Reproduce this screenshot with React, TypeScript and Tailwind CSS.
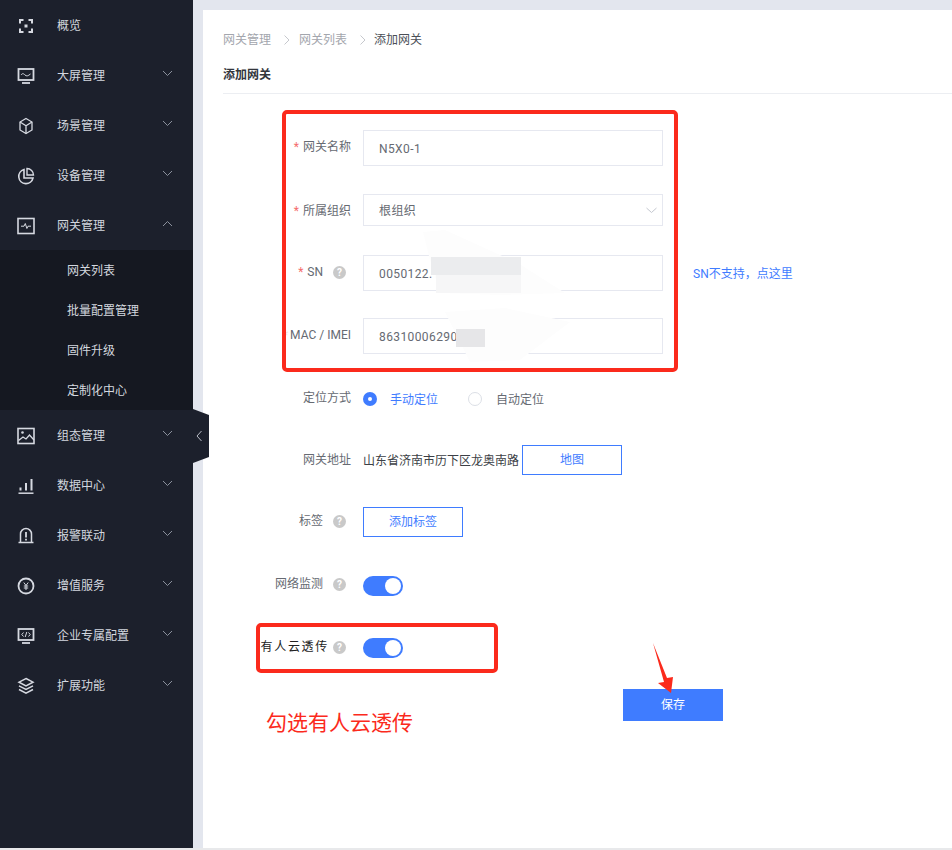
import type { ReactNode } from "react";

const Svg = ({ children }: { children: ReactNode }) => (
  <svg
    width="18"
    height="18"
    viewBox="0 0 18 18"
    fill="none"
    stroke="#d6d9e1"
    strokeWidth="1.5"
  >
    {children}
  </svg>
);

const Chevron = ({ up }: { up?: boolean }) => (
  <svg width="11" height="7" viewBox="0 0 11 7" fill="none" stroke="#8b919d" strokeWidth="1">
    <path d={up ? "M1 6l4.5-4.5L10 6" : "M1 1l4.5 4.5L10 1"} />
  </svg>
);

const menuTop = [
  {
    title: "概览",
    icon: (
      <Svg>
        <path d="M6.500 3H3v3.500M11.500 3H15v3.500M6.500 15H3v-3.500M11.500 15H15v-3.500" strokeWidth="2" />
        <rect x="7.500" y="7.500" width="3" height="3" fill="#d6d9e1" stroke="none" />
      </Svg>
    ),
  },
  {
    title: "大屏管理",
    arrow: true,
    icon: (
      <Svg>
        <rect x="1.500" y="2" width="15" height="11" strokeWidth="1.800" />
        <path d="M4 8c1.500-2 2.500-1.500 4 0s3 1 5.500-1" strokeWidth="1" />
        <path d="M5 16h8" strokeWidth="1.800" />
      </Svg>
    ),
  },
  {
    title: "场景管理",
    arrow: true,
    icon: (
      <Svg>
        <path d="M9 1.500l6 3.500v8l-6 3.500-6-3.500V5z" strokeWidth="1.300" />
        <path d="M3 5l6 3.800L15 5M9 8.800V16.500" strokeWidth="1.300" />
      </Svg>
    ),
  },
  {
    title: "设备管理",
    arrow: true,
    icon: (
      <Svg>
        <path d="M7 2.500a7.200 7.200 0 1 0 9 8.500H7z" strokeWidth="1.600" />
        <path d="M10 1.500a6.500 6.500 0 0 1 6.500 6.500H10z" strokeWidth="1.400" />
      </Svg>
    ),
  },
];

const menuBottom = [
  {
    title: "组态管理",
    icon: (
      <Svg>
        <rect x="1" y="1.500" width="16" height="15" strokeWidth="1.600" />
        <circle cx="5.500" cy="5.500" r="1.300" fill="#d6d9e1" stroke="none" />
        <path d="M1.500 13.500l4.500-3.500 3 2 3.500-4 4.500 5" strokeWidth="1.300" />
      </Svg>
    ),
  },
  {
    title: "数据中心",
    icon: (
      <Svg>
        <path d="M1.500 16.200h15" />
        <path d="M3.500 13.500v-3M9 13.500V6M14.500 13.500V2" strokeWidth="2" />
      </Svg>
    ),
  },
  {
    title: "报警联动",
    icon: (
      <Svg>
        <path d="M3.500 15V7a5.500 5.500 0 0 1 11 0v8" />
        <path d="M1.500 15.500h15" />
        <path d="M9 5v5.500M9 11.800v1.700" strokeWidth="1.800" />
      </Svg>
    ),
  },
  {
    title: "增值服务",
    icon: (
      <Svg>
        <circle cx="9" cy="9" r="7.500" strokeWidth="1.800" />
        <path d="M6.800 5.500L9 8.500l2.200-3M6.800 9h4.400M6.800 11h4.400M9 8.500V13" strokeWidth="1" />
      </Svg>
    ),
  },
  {
    title: "企业专属配置",
    icon: (
      <Svg>
        <rect x="1.500" y="2" width="15" height="11" strokeWidth="1.800" />
        <path d="M6.500 5.500L4.800 7.500l1.700 2M11.500 5.500l1.700 2-1.700 2M9.800 5L8.200 10" strokeWidth="1" />
        <path d="M5 16h8" strokeWidth="1.800" />
      </Svg>
    ),
  },
  {
    title: "扩展功能",
    icon: (
      <Svg>
        <path d="M9 1.500l7 3.700-7 3.700-7-3.700z" strokeWidth="1.500" />
        <path d="M2 8.800l7 3.700 7-3.700M2 12.500l7 3.700 7-3.700" strokeWidth="1.500" />
      </Svg>
    ),
  },
];

const subMenu = ["网关列表", "批量配置管理", "固件升级", "定制化中心"];

function MenuRow({ title, icon, arrow, up }: { title: string; icon: ReactNode; arrow?: boolean; up?: boolean }) {
  return (
    <div className="h-[50px] pt-[2px] flex items-center relative pl-[17px] text-[12px] text-[#d3d7df]">
      <div className="w-[18px] h-[18px] flex">{icon}</div>
      <span className="ml-[22px]">{title}</span>
      {arrow && (
        <span className="absolute left-[162px] top-[20px] flex">
          <Chevron up={up} />
        </span>
      )}
    </div>
  );
}

function Help({ tight }: { tight?: boolean }) {
  return (
    <span
      className={`w-[13px] h-[13px] rounded-full bg-[#c9c9c9] text-white text-[10px] font-bold leading-[13px] text-center inline-block mr-[5px] ${
        tight ? "ml-[4px]" : "ml-[10px]"
      }`}
    >
      ?
    </span>
  );
}

function Label({
  text,
  required,
  faint,
  help,
  offset = "-mt-[2px]",
}: {
  text: string;
  required?: boolean;
  faint?: boolean;
  help?: boolean;
  offset?: string;
}) {
  return (
    <div className={`w-[128px] shrink-0 flex justify-end items-center text-[12px] text-[#666a72] ${offset}`}>
      {required && <span className="text-[#f56c6c] mr-[4px]">*</span>}
      {faint && <span className="text-[#f0e4e4] mr-[2px]">*</span>}
      <span>{text}</span>
      {help && <Help />}
    </div>
  );
}

function Input({ value, h = 36 }: { value: string; h?: number }) {
  return (
    <div
      className={`w-[300px] border border-[#e6e8f0] flex items-center pl-[15px] pt-[2px] text-[12px] tracking-[0.4px] text-[#666a72] ${
        h === 36 ? "h-[36px]" : "h-[32px]"
      }`}
    >
      {value}
    </div>
  );
}

function Switch() {
  return (
    <div className="w-[40px] h-[20px] rounded-full bg-[#3f7cff] flex justify-end items-center pr-[2px] ml-[12px]">
      <div className="w-[16px] h-[16px] rounded-full bg-white" />
    </div>
  );
}

export default function App() {
  return (
    <div className="w-[952px] h-[850px] overflow-hidden relative flex flex-col bg-white font-['Roboto','Noto_Sans_CJK_SC',sans-serif]">
      <div className="flex h-[848px]">
        {/* sidebar */}
        <aside className="w-[193px] shrink-0 bg-[#1c202c]">
          {menuTop.map((m) => (
            <MenuRow key={m.title} title={m.title} icon={m.icon} arrow={m.arrow} />
          ))}
          <MenuRow
            title="网关管理"
            arrow
            up
            icon={
              <Svg>
                <rect x="1" y="1.500" width="16" height="15" strokeWidth="1.600" />
                <path d="M4 9.200h3l1.300-2.700 1.600 5 1.100-2.300h3" strokeWidth="1" />
              </Svg>
            }
          />
          <div className="bg-[#151821]">
            {subMenu.map((s) => (
              <div key={s} className="h-[40px] pt-[2px] flex items-center pl-[67px] text-[12px] text-[#d3d7df]">
                {s}
              </div>
            ))}
          </div>
          {menuBottom.map((m) => (
            <MenuRow key={m.title} title={m.title} icon={m.icon} arrow />
          ))}
        </aside>

        {/* content */}
        <main className="flex-1 bg-[#e3e6ee] pl-[10px] pt-[10px]">
          <div className="bg-white h-full pl-[20px]">
            <div className="h-[20px] pt-[20px] box-content flex items-center text-[12px] text-[#a3a6ad]">
              <span>网关管理</span>
              <svg className="ml-[13px] mr-[9px]" width="6" height="10" viewBox="0 0 6 10" fill="none" stroke="#c6c8cd">
                <path d="M.5.5L5 5 .5 9.500" />
              </svg>
              <span>网关列表</span>
              <svg className="ml-[13px] mr-[8px]" width="6" height="10" viewBox="0 0 6 10" fill="none" stroke="#c6c8cd">
                <path d="M.5.5L5 5 .5 9.500" />
              </svg>
              <span className="text-[#4b4f57]">添加网关</span>
            </div>
            <div className="mt-[15px] h-[20px] pb-[8px] text-[12px] font-bold text-[#33363c] border-b border-[#eceef2] box-content leading-[20px]">
              添加网关
            </div>

            {/* form */}
            <div className="mt-[36px] flex items-center">
              <Label text="网关名称" required />
              <div className="ml-[12px]">
                <Input value="N5X0-1" />
              </div>
            </div>
            <div className="mt-[28px] flex items-center">
              <Label text="所属组织" required offset="mt-[2px]" />
              <div className="ml-[12px] relative">
                <Input value="根组织" h={32} />
                <svg
                  className="absolute right-[6px] top-[13px]"
                  width="11"
                  height="7"
                  viewBox="0 0 11 7"
                  fill="none"
                  stroke="#c4c7cf"
                >
                  <path d="M.5 1l5 4.500 5-4.500" />
                </svg>
              </div>
            </div>
            <div className="mt-[29px] flex items-center">
              <Label text="SN" required help />
              <div className="ml-[12px]">
                <Input value="0050122." />
              </div>
              <a className="ml-[30px] pt-[2px] text-[12px] text-[#3f7cff]">SN不支持，点这里</a>
            </div>
            <div className="mt-[27px] flex items-center">
              <Label text="MAC / IMEI" faint />
              <div className="ml-[12px]">
                <Input value="86310006290" />
              </div>
            </div>
            <div className="mt-[35px] h-[20px] flex items-center">
              <Label text="定位方式" />
              <div className="ml-[12px] flex items-center text-[12px]">
                <span className="w-[14px] h-[14px] rounded-full bg-[#3f7cff] flex items-center justify-center">
                  <span className="w-[4px] h-[4px] rounded-full bg-white" />
                </span>
                <span className="ml-[13px] pt-[2px] text-[#3f7cff]">手动定位</span>
                <span className="ml-[30px] w-[14px] h-[14px] rounded-full border border-[#dcdfe6]" />
                <span className="ml-[14px] pt-[2px] text-[#666a72]">自动定位</span>
              </div>
            </div>
            <div className="mt-[36px] flex items-center">
              <Label text="网关地址" offset="mt-0" />
              <span className="ml-[12px] pt-[2px] text-[12px] text-[#3c3f46] w-[159px] whitespace-nowrap">山东省济南市历下区龙奥南路</span>
              <button className="w-[100px] h-[30px] border border-[#3f7cff] text-[12px] text-[#3f7cff]">地图</button>
            </div>
            <div className="mt-[32px] flex items-center">
              <Label text="标签" help />
              <button className="ml-[12px] w-[100px] h-[30px] border border-[#3f7cff] text-[12px] text-[#3f7cff]">
                添加标签
              </button>
            </div>
            <div className="mt-[39px] flex items-center">
              <Label text="网络监测" help offset="-mt-[4px]" />
              <Switch />
            </div>
            <div className="mt-[42px] flex items-center">
              <div className="w-[128px] shrink-0 flex justify-end items-center text-[12px] text-[#222] -mt-[2px] whitespace-nowrap">
                <span className="tracking-[1.700px]">有人云透传</span>
                <Help tight />
              </div>
              <Switch />
            </div>
            <button className="mt-[31px] ml-[400px] w-[100px] h-[32px] bg-[#3f7cff] text-white text-[12px] block">
              保存
            </button>
          </div>
        </main>
      </div>
      <div className="h-[2px] bg-[#e8e9eb]" />

      {/* sidebar collapse handle */}
      <div className="absolute left-[193px] top-[409px] flex">
        <svg width="16" height="54" viewBox="0 0 16 54">
          <path d="M0 0l16 6v42L0 54z" fill="#1c202c" />
          <path d="M8.500 22L4 27l4.500 5" fill="none" stroke="#b8bcc6" />
        </svg>
      </div>

      {/* blurred-out serial numbers */}
      <svg className="absolute left-0 top-0 pointer-events-none" width="952" height="850">
        <path d="M423 232l22-2 55 25 21 10 44 28-65 2-60-2-10-33z" fill="#fdfdfd" />
        <path d="M445 312l60-4 65 14-50 38-50 2-15-30z" fill="#fdfdfd" />
        <rect x="431" y="257" width="90" height="18" fill="#ebecee" />
        <rect x="436" y="275" width="85" height="18" fill="#f6f6f7" />
        <rect x="456" y="329" width="29" height="18" fill="#e6e6e8" />
      </svg>

      {/* annotations */}
      <div className="absolute left-[282px] top-[110px] w-[396px] h-[262px] border-[4px] border-[#fb2a1c] rounded-[5px]" />
      <div className="absolute left-[256px] top-[623px] w-[242px] h-[50px] border-[4px] border-[#fb2a1c] rounded-[5px]" />
      <div className="absolute left-[266px] top-[708px] text-[21px] leading-[30px] text-[#fb2a1c] whitespace-nowrap">
        勾选有人云透传
      </div>
      <svg className="absolute left-0 top-0 pointer-events-none" width="952" height="850">
        <path d="M653 643l14 35 6-1-2 16-13-10 6-1z" fill="#fb2a1c" />
      </svg>
    </div>
  );
}
